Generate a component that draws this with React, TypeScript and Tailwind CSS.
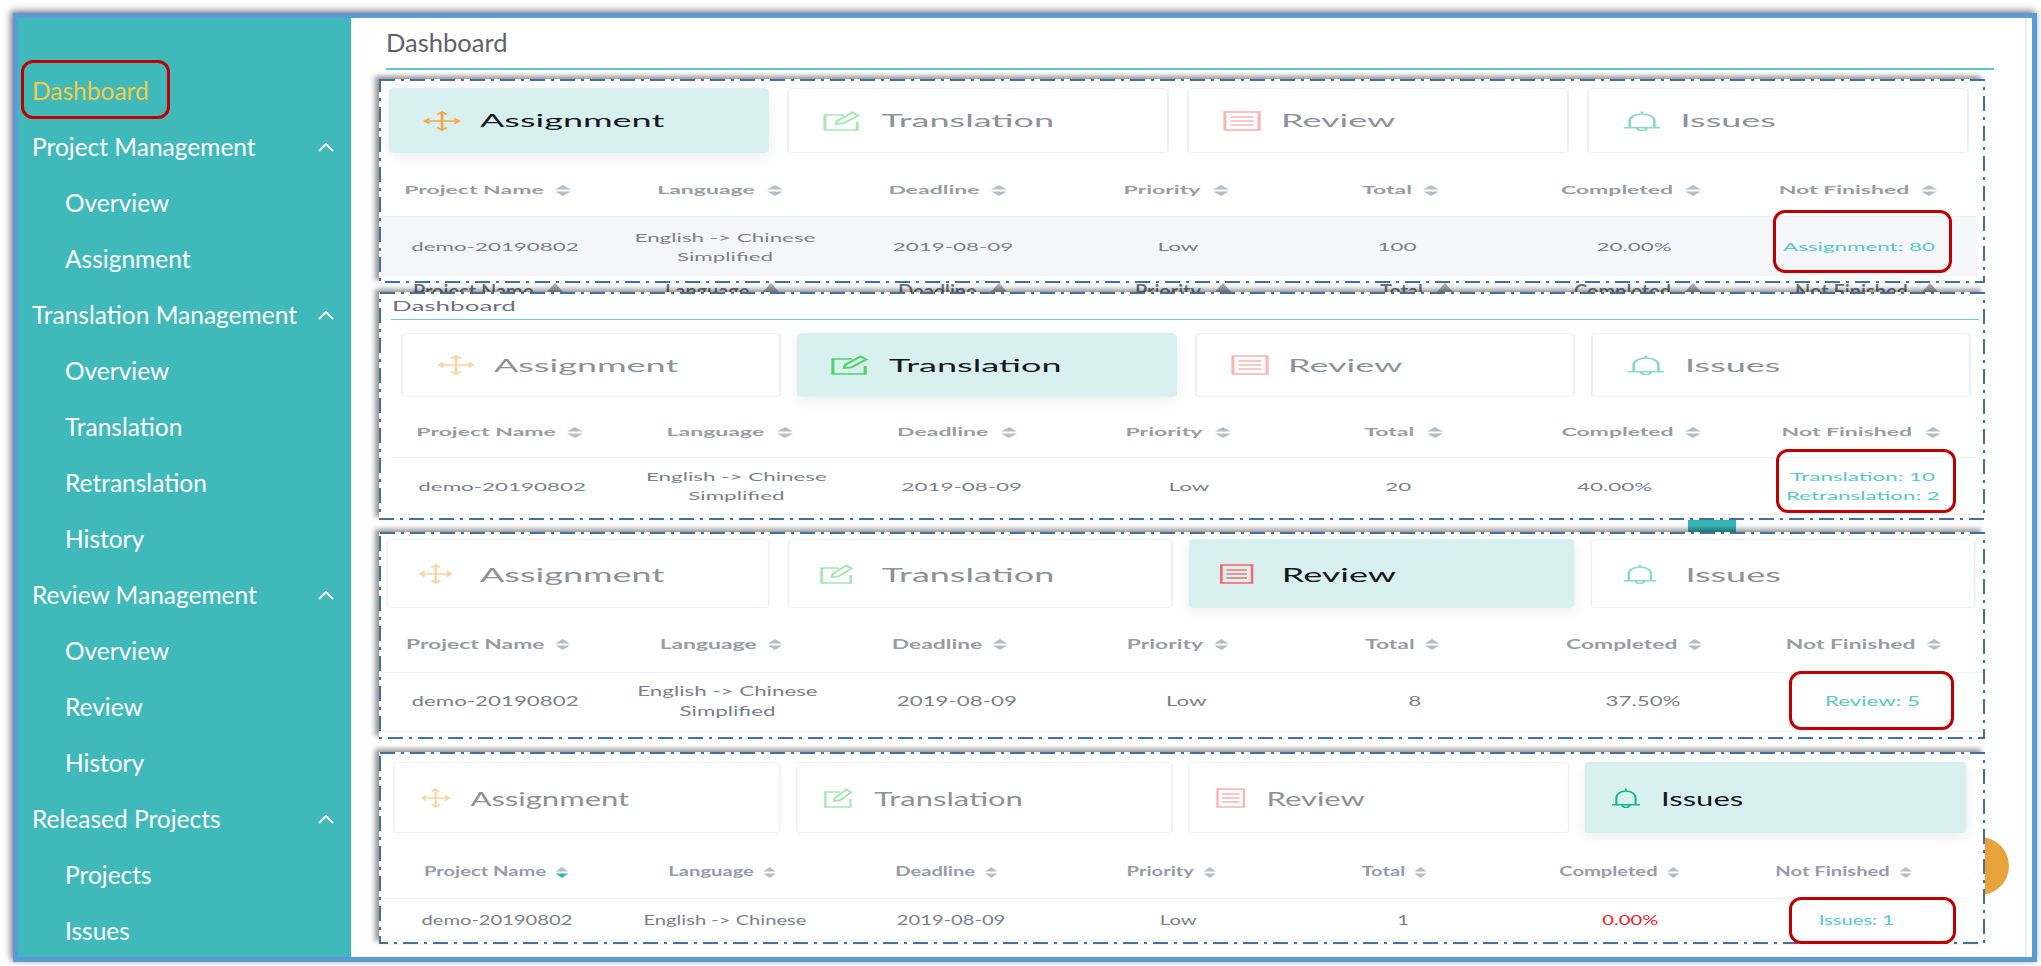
import React from 'react';

type Tab = 'Assignment' | 'Translation' | 'Review' | 'Issues';

const sideNav: { label: string; sub?: boolean; group?: boolean }[] = [
  { label: 'Project Management', group: true },
  { label: 'Overview', sub: true },
  { label: 'Assignment', sub: true },
  { label: 'Translation Management', group: true },
  { label: 'Overview', sub: true },
  { label: 'Translation', sub: true },
  { label: 'Retranslation', sub: true },
  { label: 'History', sub: true },
  { label: 'Review Management', group: true },
  { label: 'Overview', sub: true },
  { label: 'Review', sub: true },
  { label: 'History', sub: true },
  { label: 'Released Projects', group: true },
  { label: 'Projects', sub: true },
  { label: 'Issues', sub: true },
];

const headers = ['Project Name', 'Language', 'Deadline', 'Priority', 'Total', 'Completed', 'Not Finished'];
const tabs: Tab[] = ['Assignment', 'Translation', 'Review', 'Issues'];

const TabIcon = ({ tab, active }: { tab: Tab; active: boolean }) => {
  const fade = active ? '' : 'opacity-50';
  if (tab === 'Assignment') {
    return (
      <svg viewBox="0 0 20 20" preserveAspectRatio="none" className={`h-[20px] w-[19px] shrink-0 ${fade}`} fill="none" stroke="#f5a742" strokeWidth="1.4">
        <path d="M10 1v18M1 10h18" />
        <path d="M7.500 3.500L10 1l2.500 2.500M7.500 16.500L10 19l2.500-2.500M3.500 7.500L1 10l2.500 2.500M16.500 7.500L19 10l-2.500 2.500" />
      </svg>
    );
  }
  if (tab === 'Translation') {
    return (
      <svg viewBox="0 0 20 20" preserveAspectRatio="none" className={`h-[20px] w-[19px] shrink-0 ${fade}`} fill="none" stroke="#4fd36a" strokeWidth="1.6">
        <path d="M18 11v8H1V4h10" />
        <path d="M7 13l.6-3.400L15.500 1.500l3 3-7.800 7.900z" />
      </svg>
    );
  }
  if (tab === 'Review') {
    return (
      <svg viewBox="0 0 20 20" preserveAspectRatio="none" className={`h-[20px] w-[19px] shrink-0 ${fade}`} fill="none" stroke="#f8696f" strokeWidth="1.6">
        <rect x="1" y="1" width="18" height="18" />
        <path d="M4 6h12M4 10h12M4 14h12" />
      </svg>
    );
  }
  return (
    <svg viewBox="0 0 20 20" preserveAspectRatio="none" className={`h-[20px] w-[19px] shrink-0 ${fade}`} fill="none" stroke="#10b98a" strokeWidth="1.4">
      <path d="M10 .5v2" />
      <path d="M3.500 16.500V9.500a6.500 6.500 0 0 1 13 0v7" />
      <path d="M.5 16.800h19" />
      <path d="M7.500 17a2.500 2.500 0 0 0 5 0" />
    </svg>
  );
};

const SortIcon = ({ teal }: { teal?: boolean }) => (
  <svg viewBox="0 0 8 11" className="ml-[6px] h-[11px] w-[8px] shrink-0">
    <path d="M4 0l4 4.500H0z" fill="#b9bcc7" />
    <path d="M4 11L0 6.500h8z" fill={teal ? '#2db3b5' : '#b9bcc7'} />
  </svg>
);

// dash-dot frame that was drawn over each pasted screenshot
const DashFrame = () => (
  <svg className="pointer-events-none absolute inset-0 z-20 h-full w-full">
    <rect x="1" y="1" fill="none" stroke="#41719c" strokeWidth="2" strokeDasharray="15 6 3 6" style={{ width: 'calc(100% - 2px)', height: 'calc(100% - 2px)' }} />
  </svg>
);

type PanelProps = {
  active: Tab;
  outer: string;
  inner: string;
  title?: boolean;
  cardRow: string;
  cardHeight: string;
  cardText: string;
  table: string;
  headCols: string;
  cols: string;
  head: string;
  headText: string;
  row: string;
  cellText: string;
  redBox: string;
  language: string;
  values: string[];
  notFinished: string;
  sortTeal?: boolean;
  completedRed?: boolean;
};

const Panel = (p: PanelProps) => (
  <section className={`relative z-10 w-[1606px] shrink-0 bg-white shadow-[-4px_-3px_5px_rgba(0,0,0,0.42)] ${p.outer}`}>
    <div className={`h-full origin-top-left ${p.inner}`}>
      {p.title && (
        <div className="mr-[3px] ml-[6px] flex h-[28px] items-end border-b border-[#6fd0d0] pb-[4px] pl-[0.5px] text-[13px] leading-[18px] text-[#6f7178]">
          Dashboard
        </div>
      )}
      <div className={`grid ${p.cardRow}`}>
        {tabs.map((tab) => (
          <div
            key={tab}
            className={`flex items-center rounded-[3px] pl-[17px] ${p.cardHeight} ${
              tab === p.active
                ? 'bg-[#d9f0f0] text-[#16181d] shadow-[0_4px_10px_rgba(0,0,0,0.07)]'
                : 'border border-[#eef0f7] text-[#8f9199]'
            }`}
          >
            <TabIcon tab={tab} active={tab === p.active} />
            <span className={p.cardText}>{tab}</span>
          </div>
        ))}
      </div>
      <div className={p.table}>
        <div className={`grid items-center ${p.headCols} ${p.head}`}>
          {headers.map((h, i) => (
            <div key={h} className={`flex items-center justify-center font-bold text-[#999ba5] ${p.headText}`}>
              {h}
              <SortIcon teal={p.sortTeal && i === 0} />
            </div>
          ))}
        </div>
        <div className={`grid items-center text-center text-[#7d7f86] ${p.cols} ${p.row} ${p.cellText}`}>
          <div>demo-20190802</div>
          <div className="whitespace-pre-line">{p.language}</div>
          {p.values.map((v, i) => (
            <div key={i} className={p.completedRed && i === 3 ? 'text-[#f5222d]' : ''}>
              {v}
            </div>
          ))}
          <div className="whitespace-pre-line text-[#55c8c8]">{p.notFinished}</div>
        </div>
      </div>
    </div>
    <div className={`absolute z-30 rounded-[12px] border-[3px] border-[#c00000] ${p.redBox}`} />
    <DashFrame />
  </section>
);

export default function App() {
  return (
    <div className="h-[966px] w-[2041px] overflow-hidden bg-white pt-[13px] pl-[13px] font-['Lato',sans-serif]">
      <div className="flex h-[949px] w-[2024px] border-[5px] border-[#5b9bd5] shadow-[-2px_-2px_7px_rgba(0,0,0,0.55)]">
        <aside className="w-[333px] shrink-0 bg-[#40b9bb] pt-[45px] text-[24.500px] text-white">
          <div className="relative flex h-[56px] items-center pl-[14px] text-[#f5cb45]">
            Dashboard
            <div className="absolute top-[-3px] left-[3px] h-[59px] w-[149px] rounded-[12px] border-[3px] border-[#c00000]" />
          </div>
          {sideNav.map((item, i) => (
            <div key={i} className={`flex h-[56px] items-center justify-between pr-[17px] ${item.sub ? 'pl-[47px]' : 'pl-[14px]'}`}>
              {item.label}
              {item.group && (
                <svg viewBox="0 0 16 9" className="h-[9px] w-[16px]" fill="none" stroke="white" strokeWidth="2">
                  <path d="M1 8l7-7 7 7" />
                </svg>
              )}
            </div>
          ))}
        </aside>

        <main className="relative flex-1 bg-white">
          <div className="h-full w-[1676px] border-r-2 border-[#eeeeee] pl-[28px]">
            <h1 className="ml-[7px] flex h-[52px] w-[1608px] items-center border-b-2 border-[#5cc5c5] pb-[2px] text-[25.500px] font-normal text-[#5f6166]">
              Dashboard
            </h1>

            <div className="mt-[9px] flex flex-col">
              <Panel
                active="Assignment"
                outer="h-[204px]"
                inner="w-[803px] scale-x-[2]"
                cardRow="grid-cols-4 gap-[9px] pt-[9px] pr-[8.5px] pl-[4.500px]"
                cardHeight="h-[65px]"
                cardText="ml-[10px] text-[18px]"
                table="pr-[4.5px] pl-[0.5px]"
                headCols="grid-cols-[216fr_248fr_208fr_248fr_202fr_258fr_196fr] pr-[10px]"
                cols="grid-cols-[230fr_230fr_226fr_224fr_214fr_260fr_190fr] pr-[11px]"
                head="h-[63px] pt-[11px]"
                headText="text-[11.500px]"
                row="h-[60px] border-t border-[#f0f1f6] bg-[#f5f6fa]"
                cellText="text-[11.200px] leading-[19px]"
                redBox="top-[131px] left-[1394px] h-[63px] w-[179px]"
                language={'English -> Chinese\nSimplified'}
                values={['2019-08-09', 'Low', '100', '20.00%']}
                notFinished="Assignment: 80"
              />
              <div className="flex h-[9px] overflow-hidden bg-white pl-[34px] text-[20px] leading-none font-semibold text-[#6f717a]">
                <div className="-mt-[3px] grid w-[1572px] grid-cols-[252px_233px_237px_245px_194px_221px_190px]">
                  {headers.map((h) => (
                    <div key={h} className="flex items-start gap-[12px] whitespace-nowrap">
                      {h}
                      <span className="mt-[3px] h-0 w-0 border-x-[10px] border-b-[11px] border-x-transparent border-b-[#a9abb3]" />
                    </div>
                  ))}
                </div>
              </div>
              <Panel
                active="Translation"
                outer="h-[228px]"
                inner="w-[803px] scale-x-[2]"
                title
                cardRow="grid-cols-4 gap-[8.5px] pt-[13px] pr-[7px] pl-[10.5px]"
                cardHeight="h-[64px]"
                cardText="ml-[10px] text-[18px]"
                table="pr-[3px] pl-[6px]"
                headCols="grid-cols-[218fr_240fr_214fr_228fr_222fr_234fr_224fr] pr-[3px]"
                cols="grid-cols-[222fr_246fr_204fr_250fr_168fr_264fr_232fr]"
                head="h-[60px] pt-[10px]"
                headText="text-[11.500px]"
                row="h-[58px] border-y border-[#f0f1f6]"
                cellText="text-[11.200px] leading-[19px]"
                redBox="top-[157px] left-[1397px] h-[64px] w-[180px]"
                language={'English -> Chinese\nSimplified'}
                values={['2019-08-09', 'Low', '20', '40.00%']}
                notFinished={'Translation: 10\nRetranslation: 2'}
              />
              <div className="h-[12px] bg-white pl-[1309px]">
                <div className="h-full w-[48px] bg-[#36b5b5]" />
              </div>
              <Panel
                active="Review"
                outer="h-[207px]"
                inner="w-[892px] scale-x-[1.8]"
                cardRow="grid-cols-4 gap-[9.500px] pt-[7px] pr-[5px] pl-[3.600px]"
                cardHeight="h-[69px]"
                cardText="ml-[15.500px] text-[20px]"
                table="pl-[0.5px]"
                headCols="grid-cols-[216fr_250fr_208fr_248fr_202fr_262fr_196fr] pr-[13px]"
                cols="grid-cols-[230fr_234fr_224fr_234fr_222fr_234fr_224fr]"
                head="h-[64px] pt-[10px]"
                headText="text-[12.700px]"
                row="h-[60px] border-y border-[#f0f1f6]"
                cellText="text-[12.400px] leading-[20px]"
                redBox="top-[139px] left-[1410px] h-[59px] w-[165px]"
                language={'English -> Chinese\nSimplified'}
                values={['2019-08-09', 'Low', '8', '37.50%']}
                notFinished="Review: 5"
              />
              <div className="h-[13px] bg-white" />
              <Panel
                active="Issues"
                outer="h-[192px]"
                inner="w-[1036px] scale-x-[1.55]"
                cardRow="grid-cols-[298fr_289fr_292fr_293fr] gap-[10px] pt-[10px] pr-[12px] pl-[8.500px]"
                cardHeight="h-[71px]"
                cardText="ml-[13.500px] text-[20px]"
                table="pr-[12.500px] pl-[2.500px]"
                headCols="grid-cols-[228fr_228fr_224fr_230fr_220fr_234fr_218fr] pr-[9px]"
                cols="grid-cols-[228fr_228fr_224fr_230fr_220fr_234fr_218fr]"
                head="h-[65px] pt-[13px]"
                headText="text-[13px]"
                row="h-[43px] border-y border-[#f0f1f6]"
                cellText="text-[13px] leading-[20px]"
                redBox="top-[145px] left-[1410px] h-[47px] w-[167px]"
                language="English -> Chinese"
                values={['2019-08-09', 'Low', '1', '0.00%']}
                notFinished="Issues: 1"
                sortTeal
                completedRed
              />
            </div>
          </div>
          <div className="absolute top-[819px] left-[1600px] h-[58px] w-[58px] rounded-full bg-[#e8a33d]" />
        </main>
      </div>
    </div>
  );
}
